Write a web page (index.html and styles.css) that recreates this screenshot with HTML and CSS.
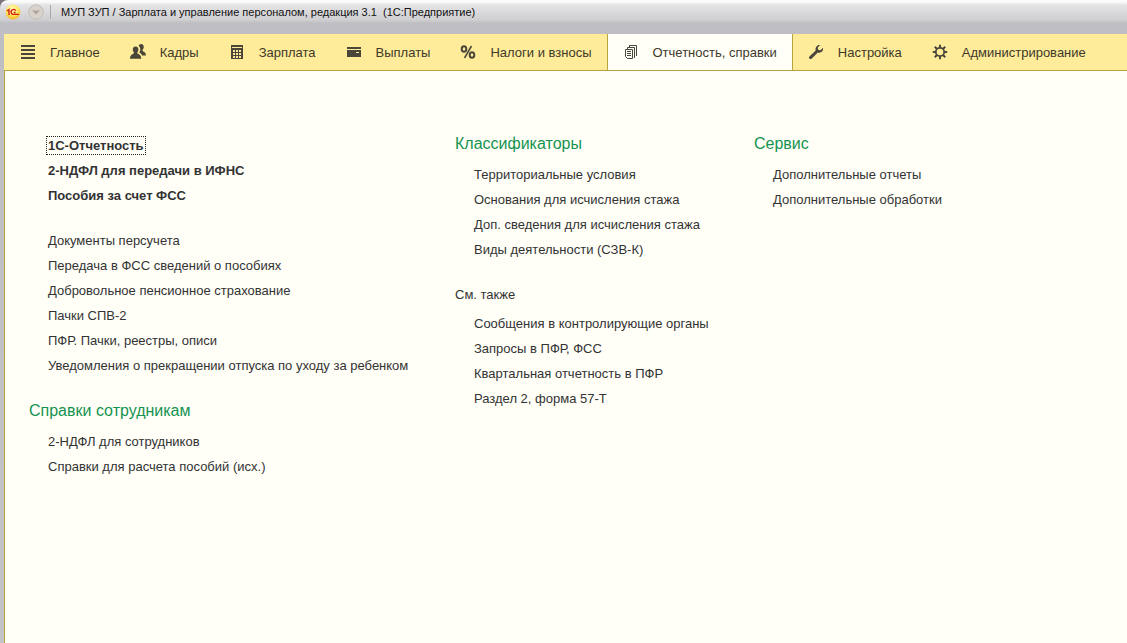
FILE: index.html
```html
<!DOCTYPE html>
<html lang="ru">
<head>
<meta charset="utf-8">
<title>МУП ЗУП / Зарплата и управление персоналом, редакция 3.1</title>
<link rel="stylesheet" href="styles.css">
</head>
<body>
<div class="window">
  <header class="titlebar">
    <svg class="logo" viewBox="0 0 16 16" aria-hidden="true">
      <defs><radialGradient id="sun" cx="45%" cy="30%" r="70%"><stop offset="0" stop-color="#fffbc0"/><stop offset=".6" stop-color="#ffe45a"/><stop offset="1" stop-color="#f3b52c"/></radialGradient></defs>
      <circle cx="8" cy="8" r="7.500" fill="url(#sun)"/>
      <path d="M1.800 6.500h1.400L4 5.700V11M10.800 6.700A2.500 2.500 0 1 0 8.600 10.400H14M10.600 8.500H8.700" fill="none" stroke="#cf2418" stroke-width="1.400"/>
    </svg>
    <button class="menu-button" type="button" aria-label="Меню">
      <svg viewBox="0 0 16 16" aria-hidden="true"><circle cx="8" cy="8" r="7.300" fill="#d9d2cc" stroke="#c6bdb6"/><path d="M4 6.500h8L8 10.500z" fill="#aea49c"/></svg>
    </button>
    <span class="divider"></span>
    <h1 class="title">МУП ЗУП / Зарплата и управление персоналом, редакция 3.1&nbsp; (1С:Предприятие)</h1>
  </header>

  <nav class="sections">
    <a class="section" href="#main"><svg viewBox="0 0 16 16"><path d="M1 2h14M1 6h14M1 10h14M1 14h14" stroke="currentColor" stroke-width="2"/></svg>Главное</a>
    <a class="section" href="#staff"><svg viewBox="0 0 16 16"><path d="M11 0c2 0 3 1.400 2.700 3.300-.1 1.500-.8 2.300-1.300 3 .2 1.700 3.600 1.400 3.600 5.200h-4c-.5-1.800-1.600-2.400-2.800-3 1-1.300 1.300-2.800 1-4.300-.2-1-.8-1.700-1.500-2.200C9 .7 9.800 0 11 0z" fill="currentColor"/><path d="M5.600 2.600c2 0 3 1.300 2.800 3.200-.1 1.500-.7 2.200-1.200 2.900.2 1.500 4.100 1.200 4.100 6.100H0c0-4.900 3.800-4.600 4-6.100-.5-.7-1.100-1.400-1.200-2.900-.2-1.900.8-3.200 2.800-3.200z" fill="currentColor"/></svg>Кадры</a>
    <a class="section" href="#salary"><svg viewBox="0 0 16 16"><path fill="currentColor" fill-rule="evenodd" d="M2 1h12v14H2zM3 3v1h10V3zM4 6v2h2V6zM7 6v2h2V6zM10 6v2h2V6zM4 9v2h2V9zM7 9v2h2V9zM10 9v2h2V9zM4 12v2h2v-2zM7 12v2h2v-2zM10 12v2h2v-2z"/></svg>Зарплата</a>
    <a class="section" href="#payments"><svg viewBox="0 0 16 16"><path fill="currentColor" d="M1 3h14v2H1zM1 6h14v7H1z"/><path d="M10 8.500h3" stroke="#ffec9b"/></svg>Выплаты</a>
    <a class="section" href="#taxes"><svg viewBox="0 0 16 16" fill="none" stroke="currentColor"><ellipse cx="4" cy="5" rx="2.300" ry="2.800" stroke-width="2"/><ellipse cx="12" cy="11" rx="2.300" ry="2.800" stroke-width="2"/><path d="M11.500 2 4.500 14" stroke-width="1.500"/></svg>Налоги и взносы</a>
    <a class="section active" href="#reports" aria-current="page"><svg viewBox="0 0 16 16" fill="none" stroke="currentColor"><path d="M6.500 3V1.500h7V12M4.500 5V3.500h7V14M2.500 5.500h7v9h-5l-2-2zM4 7.500h4M4 9.500h4M4 11.500h4"/></svg>Отчетность, справки</a>
    <a class="section" href="#settings"><svg viewBox="0 0 16 16"><path fill="currentColor" d="M12.200 1 9.800 3.400l.3 2.400 2.300.4 2.600-2.400c.5 3-1.600 5.600-5.200 4.700L3.600 14.700c-1.500 1.200-3.500-.7-2.200-2.200L7.700 6.600C6.900 3.400 9.300.5 12.200 1z"/></svg>Настройка</a>
    <a class="section" href="#admin"><svg viewBox="0 0 16 16" fill="none" stroke="currentColor"><circle cx="8" cy="8" r="4.200" stroke-width="1.800"/><path d="M8 .8v3M8 12.200v3M.8 8h3M12.200 8h3M2.800 2.800l2.200 2.200M11 11l2.200 2.200M2.800 13.200 5 11M11 5l2.200-2.200" stroke-width="2"/></svg>Администрирование</a>
  </nav>

  <main class="content">
    <div class="column column-first">
      <ul class="links important">
        <li><a class="focused" href="#r1">1С-Отчетность</a></li>
        <li><a href="#r2">2-НДФЛ для передачи в ИФНС</a></li>
        <li><a href="#r3">Пособия за счет ФСС</a></li>
      </ul>
      <ul class="links">
        <li><a href="#r4">Документы персучета</a></li>
        <li><a href="#r5">Передача в ФСС сведений о пособиях</a></li>
        <li><a href="#r6">Добровольное пенсионное страхование</a></li>
        <li><a href="#r7">Пачки СПВ-2</a></li>
        <li><a href="#r8">ПФР. Пачки, реестры, описи</a></li>
        <li><a href="#r9">Уведомления о прекращении отпуска по уходу за ребенком</a></li>
      </ul>
      <section>
        <h2 class="heading">Справки сотрудникам</h2>
        <ul class="links">
          <li><a href="#r10">2-НДФЛ для сотрудников</a></li>
          <li><a href="#r11">Справки для расчета пособий (исх.)</a></li>
        </ul>
      </section>
    </div>
    <div class="column">
      <section>
        <h2 class="heading">Классификаторы</h2>
        <ul class="links">
          <li><a href="#c1">Территориальные условия</a></li>
          <li><a href="#c2">Основания для исчисления стажа</a></li>
          <li><a href="#c3">Доп. сведения для исчисления стажа</a></li>
          <li><a href="#c4">Виды деятельности (СЗВ-К)</a></li>
        </ul>
      </section>
      <section>
        <h2 class="subheading">См. также</h2>
        <ul class="links">
          <li><a href="#s1">Сообщения в контролирующие органы</a></li>
          <li><a href="#s2">Запросы в ПФР, ФСС</a></li>
          <li><a href="#s3">Квартальная отчетность в ПФР</a></li>
          <li><a href="#s4">Раздел 2, форма 57-Т</a></li>
        </ul>
      </section>
    </div>
    <div class="column">
      <section>
        <h2 class="heading">Сервис</h2>
        <ul class="links">
          <li><a href="#d1">Дополнительные отчеты</a></li>
          <li><a href="#d2">Дополнительные обработки</a></li>
        </ul>
      </section>
    </div>
  </main>
</div>
</body>
</html>
```
FILE: styles.css
```css
* { box-sizing: border-box; }

body {
  margin: 0;
  background: #77737a;
  color: #333;
  font: 13px/25px "Liberation Sans", Arial, sans-serif;
}

a { color: inherit; text-decoration: none; }

.window {
  display: flex;
  flex-direction: column;
  min-height: 100vh;
  padding-left: 4px;
  overflow: hidden;
  border-radius: 8px 0 0 0;
  background: linear-gradient(#fafafa 0, #fafafa 2px, #e4e3e5 5px, #cfced1 20px, #bfbec2 23px, #c4c3c7 100%);
}

.titlebar {
  display: flex;
  align-items: center;
  height: 34px;
  padding: 0 0 10px 1px;
}

.logo { width: 16px; height: 16px; }

.menu-button {
  width: 16px;
  height: 16px;
  margin-left: 7px;
  padding: 0;
  border: 0;
  background: none;
}

.menu-button svg { display: block; }

.divider {
  width: 1px;
  height: 14px;
  margin: 0 10px 0 6px;
  background: #aaa8ad;
}

.title {
  margin: 0;
  color: #111;
  font-size: 11px;
  font-weight: 400;
  line-height: 16px;
  white-space: nowrap;
}

.sections {
  display: flex;
  height: 37px;
  padding-left: 1px;
  background: #ffec9b;
  border-bottom: 1px solid #b9a43c;
}

.section {
  display: flex;
  align-items: center;
  gap: 14px;
  padding: 0 15px;
  white-space: nowrap;
  color: #40392a;
}

.section svg { flex: none; width: 16px; height: 16px; color: #4a4639; }

.section.active {
  margin-bottom: -1px;
  background: #fffff8;
  border: solid #b9a43c;
  border-width: 0 1px 1px;
}

.content {
  flex: 1;
  display: grid;
  grid-template-columns: 426px 299px 1fr;
  align-items: start;
  padding: 60px 0 24px 24px;
  background: #fffff8;
  border-left: 1px solid #b9a43c;
}

.column { display: grid; gap: 20px; }

.column-first { padding-top: 2px; }

.links { margin: 0; padding: 0 0 0 19px; list-style: none; }

.important { font-weight: 700; }

.focused { outline: 1px dotted #222; outline-offset: 1px; }

.heading {
  margin: 0 0 6px;
  color: #159350;
  font-size: 16px;
  font-weight: 400;
  line-height: 25px;
}

.subheading {
  margin: 0 0 4px;
  font-size: 13px;
  font-weight: 400;
  line-height: 25px;
}
```
